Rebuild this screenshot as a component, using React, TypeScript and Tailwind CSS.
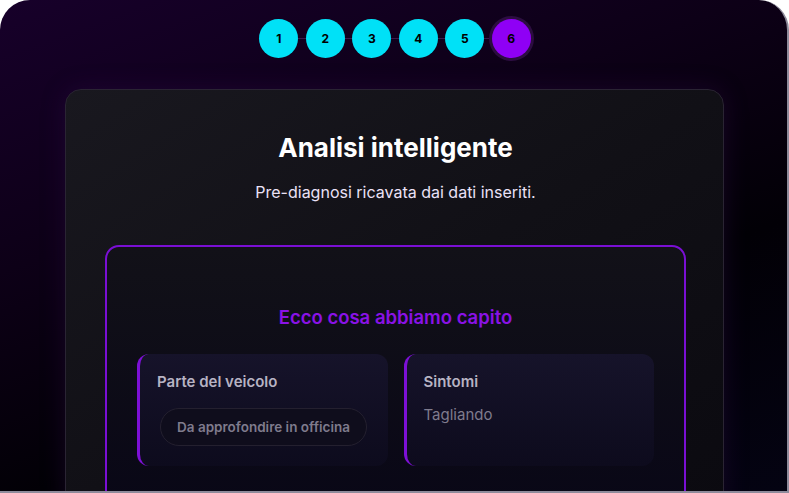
import React from "react";

const steps = [1, 2, 3, 4, 5, 6];

function Stepper() {
  return (
    <div className="flex items-center justify-center pt-[19px] pl-[3px]">
      {steps.map((n, i) => (
        <React.Fragment key={n}>
          {i > 0 && <div className="w-[7.5px] h-px bg-[#3b1a4d]" />}
          {n === 6 ? (
            <div className="w-[39px] h-[39px] rounded-full bg-[#8f00f5] ring-[3px] ring-[#2c0d40] flex items-center justify-center text-[12px] font-bold text-black">
              {n}
            </div>
          ) : (
            <div className="w-[39px] h-[39px] rounded-full bg-[#00e1f7] flex items-center justify-center text-[12px] font-bold text-black">
              {n}
            </div>
          )}
        </React.Fragment>
      ))}
    </div>
  );
}

function InfoCard({ title, children }: { title: string; children: React.ReactNode }) {
  return (
    <div className="flex-1 rounded-xl border-l-[3px] border-[#7d10d6] bg-gradient-to-b from-[#16132a] to-[#0d0b1d] pt-[18px] pb-[20px] pl-[17px] pr-4">
      <h3 className="text-[15px] leading-[20px] font-semibold text-[#b7b3c3]">{title}</h3>
      {children}
    </div>
  );
}

export default function App() {
  return (
    <div className="w-[789px] h-[493px] bg-white" style={{ fontFamily: "Inter, 'Noto Sans', sans-serif" }}>
      <div className="w-[789px] h-[493px] rounded-t-[30px] overflow-hidden border-r-2 border-b-2 border-[#8e8b9b] bg-[linear-gradient(160deg,#17002a_0%,#0d0017_35%,#020006_65%,#040312_100%)]">
        <Stepper />
        <div className="mt-[31px] ml-[65px] w-[659px] h-[420px] rounded-2xl border border-[#2a2433] bg-gradient-to-br from-[#19181f] via-[#111016] to-[#0b0a10] shadow-[0_0_24px_rgba(60,15,90,0.3)] pt-[42px] pl-[39px] pr-[37px]">
          <h1 className="text-center text-[26px] leading-[32px] font-bold text-white">Analisi intelligente</h1>
          <p className="mt-[17px] text-center text-[16px] leading-[22px] text-[#ebe2f7]">
            Pre-diagnosi ricavata dai dati inseriti.
          </p>
          <div className="mt-[42px] w-[581px] h-[300px] rounded-[14px] border-2 border-[#7a0fd4] bg-gradient-to-b from-[#121118] to-[#080616] pt-[57px] px-[30px]">
            <h2 className="text-center text-[18.5px] leading-[26px] font-semibold text-[#8a12e6]">
              Ecco cosa abbiamo capito
            </h2>
            <div className="mt-[24px] flex gap-4">
              <InfoCard title="Parte del veicolo">
                <div className="mt-4 ml-[3px] inline-flex h-[38px] items-center rounded-full border border-[#24202f] bg-[#0f0d1c] px-4 text-[13.5px] font-semibold text-[#7f7b8d]">
                  Da approfondire in officina
                </div>
              </InfoCard>
              <InfoCard title="Sintomi">
                <p className="mt-[13px] text-[15px] leading-[20px] text-[#7f7b8d]">Tagliando</p>
              </InfoCard>
            </div>
          </div>
        </div>
      </div>
    </div>
  );
}
